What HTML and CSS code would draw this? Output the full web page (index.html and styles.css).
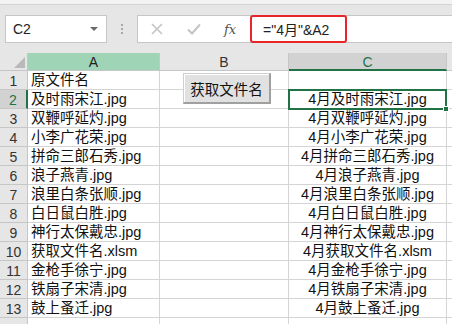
FILE: index.html
```html
<!DOCTYPE html>
<html lang="zh-CN">
<head>
<meta charset="utf-8">
<link rel="stylesheet" href="styles.css">
</head>
<body>
<div class="topstrip"></div>
<div class="fbar">
  <div class="namebox"><span>C2</span><span class="dd"></span></div>
  <div class="sep"><i></i><i></i><i></i></div>
  <div class="formula">
    <div class="ficons">
      <svg width="14" height="14" viewBox="0 0 14 14"><path d="M2 2L12 12M12 2L2 12" stroke="#c4c4c4" stroke-width="1.6" fill="none"/></svg>
      <svg width="16" height="14" viewBox="0 0 16 14"><path d="M2 7.5L6 11.5L14 2.5" stroke="#c4c4c4" stroke-width="2" fill="none"/></svg>
      <span class="fx">fx</span>
    </div>
    <div class="ftext">="4月"&amp;A2</div>
  </div>
</div>
<div class="sheet">
  <div class="grid">
    <div class="corner"><span class="tri"></span></div>
    <div class="ch chA">A</div>
    <div class="ch">B</div>
    <div class="ch chC">C</div>
    <div class="ch chD"></div>

    <div class="rh">1</div><div class="c a">原文件名</div><div class="c"></div><div class="c cc"></div><div class="c d"></div>
    <div class="rh rhsel">2</div><div class="c a">及时雨宋江.jpg</div><div class="c"></div><div class="c cc">4月及时雨宋江.jpg</div><div class="c d"></div>
    <div class="rh">3</div><div class="c a">双鞭呼延灼.jpg</div><div class="c"></div><div class="c cc">4月双鞭呼延灼.jpg</div><div class="c d"></div>
    <div class="rh">4</div><div class="c a">小李广花荣.jpg</div><div class="c"></div><div class="c cc">4月小李广花荣.jpg</div><div class="c d"></div>
    <div class="rh">5</div><div class="c a">拼命三郎石秀.jpg</div><div class="c"></div><div class="c cc">4月拼命三郎石秀.jpg</div><div class="c d"></div>
    <div class="rh">6</div><div class="c a">浪子燕青.jpg</div><div class="c"></div><div class="c cc">4月浪子燕青.jpg</div><div class="c d"></div>
    <div class="rh">7</div><div class="c a">浪里白条张顺.jpg</div><div class="c"></div><div class="c cc">4月浪里白条张顺.jpg</div><div class="c d"></div>
    <div class="rh">8</div><div class="c a">白日鼠白胜.jpg</div><div class="c"></div><div class="c cc">4月白日鼠白胜.jpg</div><div class="c d"></div>
    <div class="rh">9</div><div class="c a">神行太保戴忠.jpg</div><div class="c"></div><div class="c cc">4月神行太保戴忠.jpg</div><div class="c d"></div>
    <div class="rh">10</div><div class="c a">获取文件名.xlsm</div><div class="c"></div><div class="c cc">4月获取文件名.xlsm</div><div class="c d"></div>
    <div class="rh">11</div><div class="c a">金枪手徐宁.jpg</div><div class="c"></div><div class="c cc">4月金枪手徐宁.jpg</div><div class="c d"></div>
    <div class="rh">12</div><div class="c a">铁扇子宋清.jpg</div><div class="c"></div><div class="c cc">4月铁扇子宋清.jpg</div><div class="c d"></div>
    <div class="rh">13</div><div class="c a">鼓上蚤迁.jpg</div><div class="c"></div><div class="c cc">4月鼓上蚤迁.jpg</div><div class="c d"></div>
    <div class="rh"></div><div class="c a"></div><div class="c"></div><div class="c cc"></div><div class="c d"></div>
  </div>
  <div class="btn">获取文件名</div>
  <div class="selbox"><span class="handle"></span></div>
</div>
</body>
</html>
```

FILE: styles.css
```css
* { box-sizing: border-box; }
html, body { margin: 0; padding: 0; }
body {
  width: 452px;
  height: 324px;
  overflow: hidden;
  background: #e6e6e6;
  font-family: "Liberation Sans", "Noto Sans CJK SC", sans-serif;
  color: #000;
}
.topstrip {
  height: 5px;
  background: #f3f3f3;
  border-bottom: 1px solid #d2d2d2;
}
.fbar {
  display: flex;
  align-items: center;
  height: 28px;
  margin-top: 10px;
}
.namebox {
  margin-left: 5px;
  width: 102px;
  height: 28px;
  background: #fff;
  border: 1px solid #c6c6c6;
  display: flex;
  align-items: center;
  justify-content: space-between;
  padding: 0 8px 0 7px;
  font-size: 14px;
  color: #222;
}
.dd {
  width: 0; height: 0;
  border-left: 4px solid transparent;
  border-right: 4px solid transparent;
  border-top: 4px solid #6a6a6a;
}
.sep {
  width: 30px;
  display: flex;
  flex-direction: column;
  align-items: center;
  gap: 2px;
}
.sep i {
  display: block;
  width: 2px; height: 2px;
  background: #a8a8a8;
}
.formula {
  flex: 1;
  height: 28px;
  background: #fff;
  border: 1px solid #c6c6c6;
  border-right: none;
  display: flex;
  align-items: center;
}
.ficons {
  display: flex;
  align-items: center;
  gap: 22px;
  padding-left: 12px;
  width: 112px;
}
.fx {
  font-family: "DejaVu Serif", "Liberation Serif", serif;
  font-style: italic;
  font-size: 13px;
  color: #555;
}
.ftext {
  height: 28px;
  width: 97px;
  border: 2px solid #e8262a;
  border-radius: 3px;
  display: flex;
  align-items: center;
  padding-left: 11px;
  font-size: 14px;
  color: #222;
}
.sheet {
  position: relative;
  margin-top: 10px;
}
.grid {
  display: grid;
  grid-template-columns: 28px 132px 129px 158px 1fr;
  grid-template-rows: 18px repeat(14, 19px);
}
.corner {
  position: relative;
  border-right: 1px solid #c6c6c6;
  border-bottom: 1px solid #c6c6c6;
}
.tri {
  position: absolute;
  right: 2px; bottom: 2px;
  width: 0; height: 0;
  border-left: 11px solid transparent;
  border-bottom: 11px solid #b9b9b9;
}
.ch {
  display: flex;
  align-items: center;
  justify-content: center;
  font-size: 14px;
  color: #333;
  border-right: 1px solid #c6c6c6;
  border-bottom: 1px solid #c6c6c6;
  padding-top: 1px;
}
.chA { background: #9fd5b6; color: #222; }
.chC { background: #d2d2d2; color: #217346; border-bottom: 2px solid #217346; }
.chD { border-right: none; }
.rh {
  display: flex;
  align-items: center;
  justify-content: center;
  font-size: 14px;
  color: #333;
  border-right: 1px solid #c6c6c6;
  border-bottom: 1px solid #c6c6c6;
  padding-top: 1px;
}
.rhsel {
  background: #d2d2d2;
  color: #217346;
  border-right: 2px solid #217346;
}
.c {
  background: #fff;
  border-right: 1px solid #d4d4d4;
  border-bottom: 1px solid #d4d4d4;
  font-size: 14.5px;
  line-height: 18px;
  white-space: nowrap;
  display: flex;
  align-items: flex-end;
  color: #111;
}
.a { padding-left: 3px; }
.cc { justify-content: center; }
.d { border-right: none; }
.btn {
  position: absolute;
  left: 183px;
  top: 20px;
  width: 88px;
  height: 31px;
  background: #e1e1e1;
  border: 1px solid #cfcfcf;
  border-right: 2px solid #a0a0a0;
  border-bottom: 2px solid #a0a0a0;
  box-shadow: inset 1px 1px 0 #fff;
  display: flex;
  align-items: center;
  justify-content: center;
  font-size: 14.5px;
  color: #111;
}
.selbox {
  position: absolute;
  left: 288px;
  top: 36px;
  width: 159px;
  height: 21px;
  border: 2px solid #217346;
}
.handle {
  position: absolute;
  right: -4px;
  bottom: -4px;
  width: 6px;
  height: 6px;
  background: #217346;
  border: 1px solid #fff;
}
```
